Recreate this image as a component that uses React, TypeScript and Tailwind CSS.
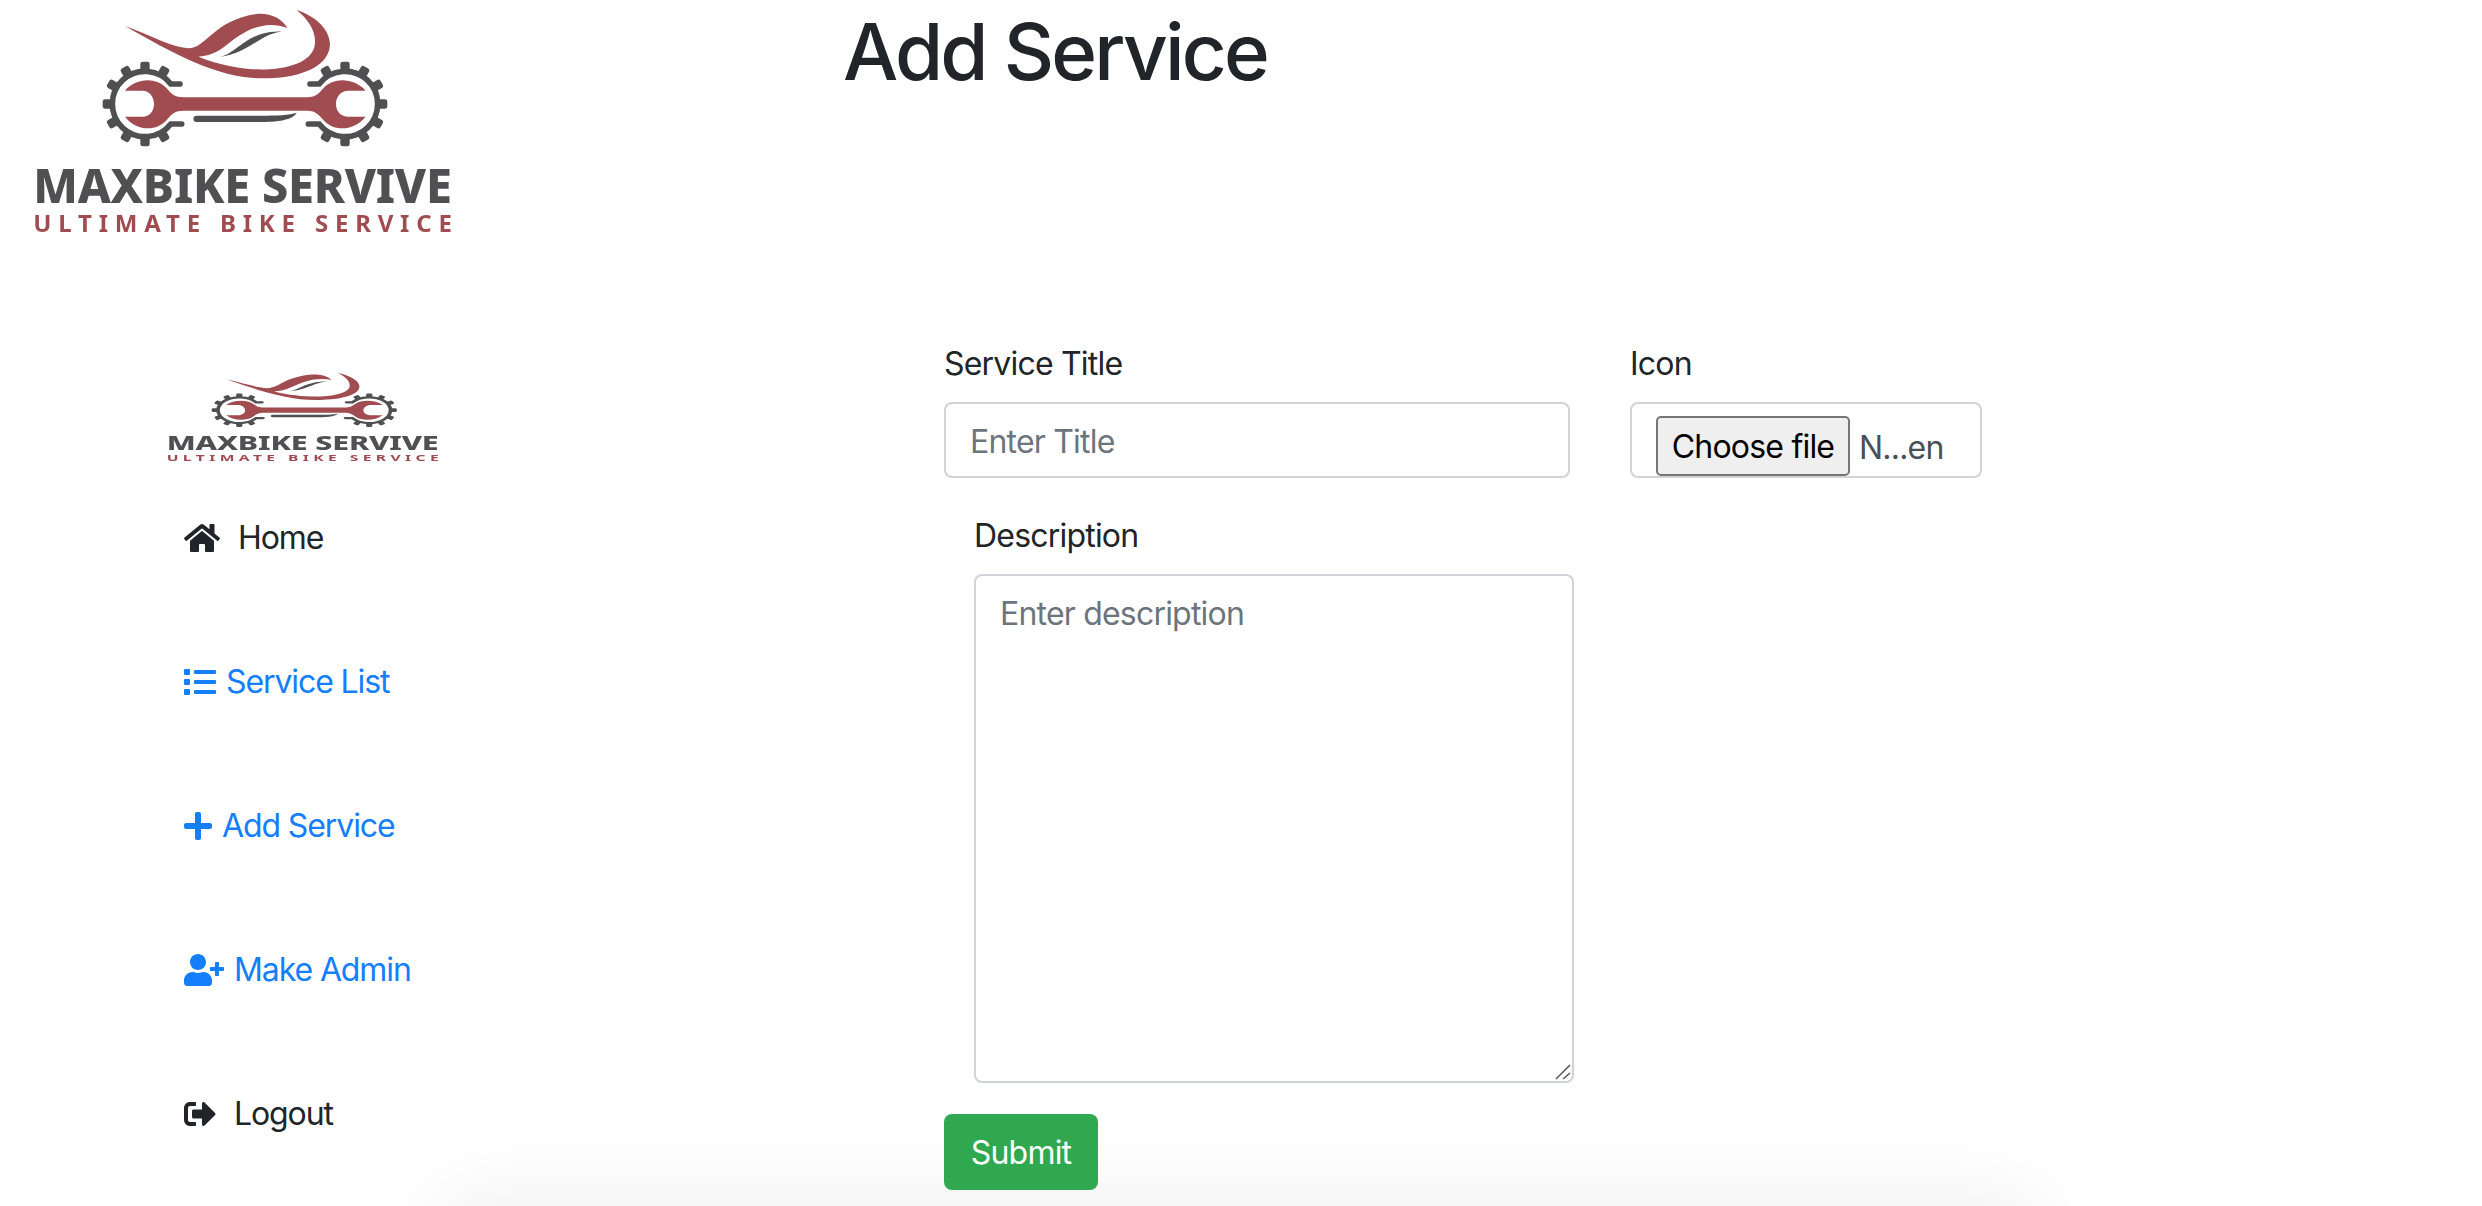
import { FaHome, FaList, FaPlus, FaUserPlus, FaSignOutAlt } from "react-icons/fa";

// clockwise from the top, the side facing the wrench handle has none
const toothAngles = [0, 30, 150, 180, 210, 240, 270, 300, 330];

function Gear({ cx, flip }: { cx: number; flip?: boolean }) {
  return (
    <g transform={flip ? `translate(${cx} 312) scale(-1 1)` : `translate(${cx} 312)`} fill="#505052">
      <path
        d="M105 -60 H77.5 A98 98 0 1 0 77.5 60 H110"
        fill="none"
        stroke="#505052"
        strokeWidth="17"
        strokeLinecap="round"
      />
      {toothAngles.map((a) => (
        <rect key={a} x="-14" y="-127" width="28" height="28" rx="7" transform={`rotate(${a})`} />
      ))}
    </g>
  );
}

// both logos are the same picture, the sidebar one is squashed
function Logo({ className }: { className: string }) {
  return (
    <svg viewBox="0 0 1500 780" preserveAspectRatio="none" className={className}>
      <path
        fill="#a04c50"
        d="M375 78 C450 105 510 140 565 145 C620 145 640 60 770 42 C810 38 845 55 862 84 C800 60 740 85 680 135 C650 160 620 168 595 170 C670 200 750 212 810 208 C900 200 945 170 945 125 C945 85 920 55 890 30 C950 50 990 90 990 135 C985 210 880 235 790 235 C650 235 520 160 375 78 Z"
      />
      <path fill="#505052" d="M655 172 C710 165 740 90 845 95 C780 100 750 160 655 172 Z" />
      <Gear cx={435} />
      <Gear cx={1035} flip />
      <path
        fill="#a04c50"
        d="M375 272 C410 232 470 232 500 265 C515 283 525 292 550 292 H920 C945 292 955 283 970 265 C1000 232 1060 232 1097 272 H1045 C1020 272 1008 292 1008 312 C1008 332 1020 350 1045 350 H1097 C1060 395 1000 395 970 360 C955 342 945 332 920 332 H550 C525 332 515 342 500 360 C470 395 410 395 375 350 H428 C450 350 462 332 462 312 C462 292 450 272 428 272 Z"
      />
      <path
        fill="#505052"
        d="M590 347 H780 C830 347 870 345 890 338 C880 360 830 366 780 366 H590 A9.5 9.5 0 0 1 590 347 Z"
      />
      <text
        x="100"
        y="610"
        fontSize="142"
        fontWeight="800"
        fill="#505052"
        textLength="1255"
        lengthAdjust="spacingAndGlyphs"
        className="[font-family:'Noto_Sans',sans-serif]"
      >
        MAXBIKE SERVIVE
      </text>
      <text
        x="100"
        y="697"
        fontSize="72"
        fontWeight="700"
        fill="#a04c50"
        textLength="1255"
        lengthAdjust="spacing"
        className="[font-family:'Noto_Sans',sans-serif]"
      >
        ULTIMATE BIKE SERVICE
      </text>
    </svg>
  );
}

export default function App() {
  return (
    <div className="h-[1206px] overflow-hidden bg-white text-[32px] leading-[48px] tracking-[-0.8px] text-[#212529] [font-family:Inter,sans-serif]">
      <div className="flex h-[339px]">
        <div className="w-[843px]">
          <Logo className="h-[260px] w-[500px] blur-[0.7px]" />
        </div>
        <h1 className="pt-[4px] text-[78px] leading-[96px] font-medium tracking-[-2.8px]">Add Service</h1>
      </div>

      <div className="flex">
        <div className="w-[944px] pt-[30px] pl-[145px]">
          <Logo className="h-[103px] w-[325px] blur-[0.5px]" />
          <div className="mt-[42px] flex flex-col gap-[96px] pl-[39px] tracking-[-1.1px]">
            <div className="flex items-center gap-[18px]">
              <FaHome className="h-[32px] w-[36px]" />
              <span>Home</span>
            </div>
            <div className="flex items-center gap-[10px] text-[#147efb]">
              <FaList className="h-[32px] w-[32px]" />
              <span>Service List</span>
            </div>
            <div className="flex items-center gap-[10px] text-[#147efb]">
              <FaPlus className="h-[32px] w-[28px]" />
              <span>Add Service</span>
            </div>
            <div className="flex items-center gap-[10px] text-[#147efb]">
              <FaUserPlus className="h-[32px] w-[40px]" />
              <span>Make Admin</span>
            </div>
            <div className="flex items-center gap-[18px]">
              <FaSignOutAlt className="h-[32px] w-[32px]" />
              <span>Logout</span>
            </div>
          </div>
        </div>

        <form>
          <div className="flex gap-[60px]">
            <div className="w-[626px]">
              <label className="mb-[14px] block pt-[1px]">Service Title</label>
              <input
                placeholder="Enter Title"
                className="h-[76px] w-full rounded-lg border-2 border-[#ced4da] px-[24px] pt-[2px] outline-none placeholder:text-[#6c757d]"
              />
            </div>
            <div className="w-[352px]">
              <label className="mb-[14px] block pt-[1px]">Icon</label>
              <div className="flex h-[76px] items-start rounded-lg border-2 border-[#ced4da] pt-[12px] pl-[24px]">
                <button
                  type="button"
                  className="h-[60px] w-[194px] shrink-0 rounded-[5px] border-2 border-[#767676] bg-[#efefef] pt-[2px] text-black"
                >
                  Choose file
                </button>
                <span className="mt-[8px] ml-[9px] text-[#495057]">N...en</span>
              </div>
            </div>
          </div>

          <div className="mt-[33px] ml-[30px] w-[600px]">
            <label className="mb-[14px] block pt-[1px]">Description</label>
            <div className="relative">
              <textarea
                placeholder="Enter description"
                className="block h-[509px] w-full resize-none rounded-lg border-2 border-[#ced4da] px-[24px] pt-[14px] pb-[12px] outline-none placeholder:text-[#6c757d]"
              />
              <svg viewBox="0 0 16 16" className="absolute right-[3px] bottom-[3px] h-[16px] w-[16px]">
                <path d="M15 1 L1 15 M15 9 L8 15" fill="none" stroke="#555555" strokeWidth="1.5" />
              </svg>
            </div>
          </div>

          <button type="button" className="mt-[31px] h-[76px] w-[154px] rounded-lg bg-[#30a84f] pt-[2px] text-white">
            Submit
          </button>
        </form>
      </div>

      {/* only the top edge of the footer card is in view */}
      <div className="mt-[16px] ml-[445px] h-[100px] w-[1588px] shadow-[0_0_90px_rgba(0,0,0,0.08)]"></div>
    </div>
  );
}
